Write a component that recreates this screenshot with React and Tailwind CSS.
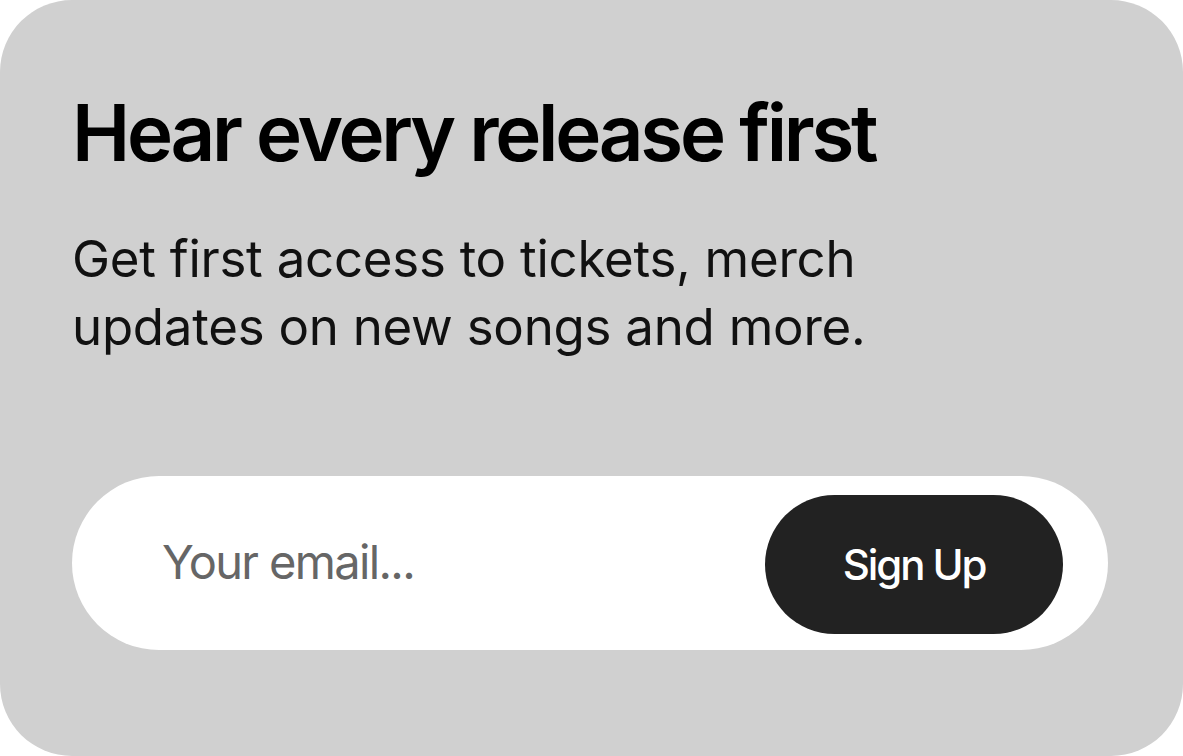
export default function App() {
  return (
    <div className="w-[1183px] h-[756px] bg-white" style={{ fontFamily: "Inter, 'Noto Sans', sans-serif" }}>
      <div className="w-full h-full rounded-[72px] bg-[#d0d0d0] pl-[72px] pr-[75px] pt-[86px] flex flex-col">
        <h1 className="text-[78px] leading-[1.2] font-semibold text-black tracking-[-0.042em] m-0">Hear every release first</h1>
        <p className="mt-[45px] text-[51px] leading-[68px] text-[#111] tracking-[-0.005em] max-w-[860px]">
          Get first access to tickets, merch updates on new songs and more.
        </p>
        <div className="mt-[115px] h-[174px] w-[1036px] rounded-full bg-white flex items-center pl-[90px] pr-[45px]">
          <input
            className="flex-1 min-w-0 bg-transparent outline-none text-[47px] tracking-[-0.035em] text-[#222] placeholder:text-[#666]"
            placeholder="Your email..."
          />
          <button className="mt-[4px] w-[298px] h-[139px] rounded-full bg-[#222] text-white text-[42px] tracking-[-0.05em] font-medium">
            Sign Up
          </button>
        </div>
      </div>
    </div>
  );
}
